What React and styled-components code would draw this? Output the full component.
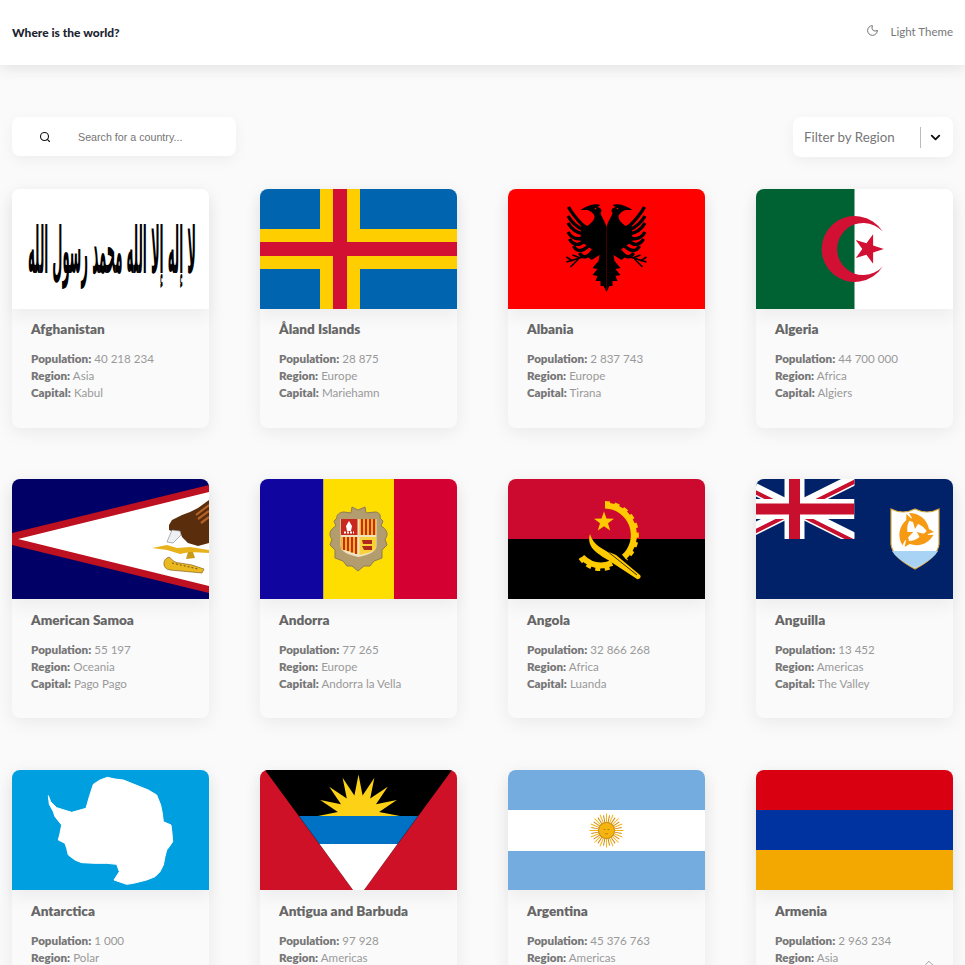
import React from "react";
import styled, { createGlobalStyle } from "styled-components";
import { ChevronDown, ChevronUp, Moon, Search } from "lucide-react";

const GlobalStyle = createGlobalStyle`
	* {
		box-sizing: border-box;
	}
	html, body {
		margin: 0;
		height: 965px;
		overflow: hidden;
		background: #fafafa;
		font-family: "Lato", "Noto Sans", sans-serif;
	}
`;

const starPoints = (cx, cy, R, r, rot, n = 5) => {
	const pts = [];
	for (let i = 0; i < n * 2; i++) {
		const a = ((rot + (i * 180) / n) * Math.PI) / 180;
		const d = i % 2 === 0 ? R : r;
		pts.push(`${(cx + d * Math.cos(a)).toFixed(2)},${(cy + d * Math.sin(a)).toFixed(2)}`);
	}
	return pts.join(" ");
};

const FlagSvg = ({ children }) => (
	<FlagImage viewBox="0 0 197 120" preserveAspectRatio="none">
		{children}
	</FlagImage>
);

const Afghanistan = () => (
	<FlagSvg>
		<rect width="197" height="120" fill="#fff" />
		<ShahadaText x="184" y="84" textLength="168" lengthAdjust="spacingAndGlyphs">
			لا إله إلا الله محمد رسول الله
		</ShahadaText>
	</FlagSvg>
);

const Aland = () => (
	<FlagSvg>
		<rect width="197" height="120" fill="#0064ae" />
		<rect x="60" width="40" height="120" fill="#ffce00" />
		<rect y="40" width="197" height="40" fill="#ffce00" />
		<rect x="73" width="14" height="120" fill="#d21034" />
		<rect y="53" width="197" height="14" fill="#d21034" />
	</FlagSvg>
);

const featherTips = [
	[38, 18],
	[38.5, 27],
	[38.5, 34],
	[38.5, 43],
	[37, 50],
	[33, 57],
	[27, 64],
];

const eagleHalf = (
	<g>
		<path
			d="M0,38 C2,31 5,28 6,24 C4,22 5,19 9,18 L6,16 C13,14 20,17 26,21 L19,21 C16,22 13,24 12,27 C12,31 15,34 19,37 L25,34 L26,52 L18,58 L12,62 L20,67 L15,71 L7,66 L8,72 L14,79 L9,80 L14,86 L9,87 L11,92 L6,92 L6,97 L3,97 L0,103 Z"
			fill="#000"
		/>
		{featherTips.map(([x, y], i) => (
			<path
				key={y}
				d={`M${23 - (i > 4 ? (i - 4) * 5 : 0)},${37 + i * 4} Q${x - 5},${y + 9} ${x},${y}`}
				fill="none"
				stroke="#000"
				strokeWidth="3.4"
			/>
		))}
		<path d="M17,66 L40,73 M26,69 L34,66 M28,70 L36,78 M34,72 L40,68" stroke="#000" strokeWidth="1.6" fill="none" />
		<circle cx="11" cy="19.5" r="0.8" fill="#f00" />
	</g>
);

const Albania = () => (
	<FlagSvg>
		<rect width="197" height="120" fill="#f00" />
		<g transform="translate(98.5,0)">
			{eagleHalf}
			<g transform="scale(-1,1)">{eagleHalf}</g>
		</g>
	</FlagSvg>
);

const Algeria = () => (
	<FlagSvg>
		<rect width="197" height="120" fill="#fff" />
		<rect width="98.5" height="120" fill="#006233" />
		<path d="M126.7,42.6 A33,33 0 1,0 126.7,77.4 A26.1,26.1 0 1,1 126.7,42.6 Z" fill="#d21034" />
		<polygon points={starPoints(112.3, 60, 15.5, 6, 0)} fill="#d21034" />
	</FlagSvg>
);

const AmericanSamoa = () => (
	<FlagSvg>
		<rect width="197" height="120" fill="#006" />
		<polygon points="0,54 197,6 197,114 0,66" fill="#bd1021" />
		<polygon points="6,60 197,13 197,107" fill="#fff" />
		<path d="M197,21 L186,29 L178,33 L170,36 L160,41 L157,46 L157,51 L162,53 L168,52 L170,58 L176,64 L186,67 L197,64 Z" fill="#5a2d0c" />
		<path d="M197,26 L184,36 M197,32 L186,40 M197,38 L189,44" stroke="#b5622a" strokeWidth="2.2" />
		<path d="M160,51 C158,56 156,60 155,63 L161,64 L169,56 L168,52 Z" fill="#eef0f3" stroke="#77808c" strokeWidth="0.6" />
		<path d="M140,69 L155,66 L165,69 L178,68 L197,71 L197,74 L178,73 L168,75 L155,71 Z" fill="#e8b21d" />
		<path d="M176,73 L174,80 L183,79 L181,73 Z" fill="#c99a17" />
		<path d="M157,78 C150,80 150,90 158,91 L190,94 L192,90 L180,86 L168,84 C162,84 160,80 157,78 Z" fill="#eab81f" stroke="#74521a" strokeWidth="0.6" />
		<path d="M160,84 L186,90" stroke="#74521a" strokeWidth="1" strokeDasharray="2 2" />
	</FlagSvg>
);

const Andorra = () => (
	<FlagSvg>
		<rect width="63.5" height="120" fill="#10069f" />
		<rect x="63.5" width="70.5" height="120" fill="#fedd00" />
		<rect x="134" width="63" height="120" fill="#d50032" />
		<path
			d="M84,33 L91,34 L92,28 L98,31 L105,28 L106,34 L115,33 C119,33 121,36 120,39 L123,42 L121,47 C127,50 129,56 125,60 L127,66 L122,71 L122,79 L114,82 L110,87 L104,87 L98,92 L92,87 L87,87 L83,82 L75,79 L75,71 L70,66 L72,60 C68,56 70,50 76,47 L74,42 L77,39 C76,36 80,33 84,33 Z"
			fill="#b39c6d"
			stroke="#8f7c54"
			strokeWidth="1"
		/>
		<path d="M80.5,40 H116.5 V67 C116.5,73 108,76 98.5,78 C89,76 80.5,73 80.5,67 Z" fill="#efe3bd" />
		<rect x="81" y="40" width="16.5" height="16" fill="#c8281e" />
		<path d="M89,42 L92,47 L91,52 H87 L86,47 Z" fill="#fff" />
		<path d="M84,53.5 H94" stroke="#fff" strokeWidth="2" strokeDasharray="2 1" />
		<rect x="99.5" y="40" width="16.5" height="16" fill="#f3b61f" />
		<path d="M102,40 V56 M106,40 V56 M110,40 V56 M114,40 V56" stroke="#c8281e" strokeWidth="2" />
		<path d="M81,58 H97.5 V75 L81,70 Z" fill="#f3b61f" />
		<path d="M84,58 V71 M88,58 V72 M92,58 V73.5 M96,58 V75" stroke="#c8281e" strokeWidth="2" />
		<path d="M99.5,58 H116 V68 C116,72 108,74 99.5,76 Z" fill="#f7d23a" />
		<path d="M102,61 H112 V65 H103 Z M102,67 H112 V71 H104 Z" fill="#b02a1c" />
	</FlagSvg>
);

const Angola = () => (
	<FlagSvg>
		<rect width="197" height="60" fill="#cc092f" />
		<rect y="60" width="197" height="60" fill="#000" />
		<path d="M97,26.5 A29.5,29.5 0 0,1 116,78" fill="none" stroke="#ffcb00" strokeWidth="6" />
		<path d="M97,24 A32,32 0 0,1 118,80" fill="none" stroke="#ffcb00" strokeWidth="4" strokeDasharray="5 4.5" />
		<path d="M74,78 C82,86 92,89 104,84" fill="none" stroke="#ffcb00" strokeWidth="6" />
		<path d="M72,79 C80,90 92,93 104,88" fill="none" stroke="#ffcb00" strokeWidth="3.5" strokeDasharray="5 4.5" />
		<polygon points={starPoints(96, 43, 10.5, 4.2, -90)} fill="#ffcb00" />
		<path d="M82,55 C79,65 84,72 100,81 L129,100 C131,101 134,98 132,96 L108,76 C95,71 85,66 82,55 Z" fill="#ffcb00" />
		<path d="M94,68 L129,96" stroke="#000" strokeWidth="0.8" />
	</FlagSvg>
);

const dolphin = (
	<path d="M-6,-18 C4,-18 12,-12 14,-2 L19,1 L13,3 C11,-2 8,-5 3,-7 L0,-2 L-2,-9 L-8,-11 L-3,-13 Z" fill="#f79a13" />
);

const Anguilla = () => (
	<FlagSvg>
		<rect width="197" height="120" fill="#012169" />
		<clipPath id="jack">
			<rect width="98.5" height="60" />
		</clipPath>
		<g clipPath="url(#jack)">
			<path d="M-21.5,0 L98.5,60 M-21.5,60 L98.5,0" stroke="#fff" strokeWidth="12" />
			<path d="M-21.5,0 L38.5,30 M38.5,30 L98.5,60" stroke="#c8102e" strokeWidth="4" transform="translate(-1.5,2)" />
			<path d="M-21.5,60 L38.5,30 M38.5,30 L98.5,0" stroke="#c8102e" strokeWidth="4" transform="translate(1.5,2)" />
			<path d="M38.5,0 V60 M-21.5,30 H98.5" stroke="#fff" strokeWidth="20" />
			<path d="M38.5,0 V60 M-21.5,30 H98.5" stroke="#c8102e" strokeWidth="11" />
		</g>
		<path d="M135,30 Q147,36 159,30 Q171,36 183,30 L183,65 Q182,78 159,90 Q136,78 135,65 Z" fill="#fff" stroke="#d9a83a" strokeWidth="1.2" />
		<path d="M136,72 H182 Q178,80 159,89 Q140,80 136,72 Z" fill="#a8d3f5" />
		<g transform="translate(159,52)">
			{dolphin}
			<g transform="rotate(120)">{dolphin}</g>
			<g transform="rotate(240)">{dolphin}</g>
		</g>
	</FlagSvg>
);

const antarcticaOutline = [
	[145, 92], [152, 110], [170, 128], [215, 142], [258, 130], [268, 95], [280, 58], [300, 45], [322, 37], [345, 42], [370, 45],
	[395, 55], [420, 65], [445, 75], [470, 90], [482, 120], [487, 145], [490, 170], [513, 180], [516, 205], [518, 230],
	[508, 245], [500, 255], [495, 275], [490, 300], [480, 320], [465, 335], [440, 345], [420, 350], [400, 355], [380, 358],
	[342, 345], [358, 320], [350, 298], [320, 295], [285, 295], [245, 293], [225, 285], [205, 270], [200, 250], [195, 235],
	[175, 225], [180, 205], [185, 180], [165, 155], [160, 140], [148, 118],
]
	.map(([x, y]) => `${(x - 36) / 3},${(y - 15) / 3}`)
	.join(" ");

const Antarctica = () => (
	<FlagSvg>
		<rect width="197" height="120" fill="#009fdf" />
		<polygon points={antarcticaOutline} fill="#fff" stroke="#fff" strokeWidth="1" strokeLinejoin="round" />
	</FlagSvg>
);

const AntiguaBarbuda = () => {
	const sun = [[58, 46]];
	for (let i = 0; i < 9; i++) {
		const tip = ((180 + i * 22.5) * Math.PI) / 180;
		const inner = ((191.25 + i * 22.5) * Math.PI) / 180;
		if (i > 0) {
			sun.push([98.5 + 41.5 * Math.cos(tip), 46 + 41.5 * Math.sin(tip)]);
		}
		if (i < 8) {
			sun.push([98.5 + 21 * Math.cos(inner), 46 + 21 * Math.sin(inner)]);
		}
	}
	sun.push([139, 46]);
	return (
		<FlagSvg>
			<rect width="197" height="120" fill="#ce1126" />
			<polygon points="5,0 192,0 104,120 93,120" fill="#000" />
			<polygon points="39,46 158,46 137.5,74 59.5,74" fill="#0072c6" />
			<polygon points="59.5,74 137.5,74 104,120 93,120" fill="#fff" />
			<polygon points={sun.map(([x, y]) => `${x.toFixed(1)},${y.toFixed(1)}`).join(" ")} fill="#fcd116" />
		</FlagSvg>
	);
};

const sunRays = Array.from({ length: 32 }, (_, i) => i * 11.25);

const Argentina = () => (
	<FlagSvg>
		<rect width="197" height="120" fill="#74acdf" />
		<rect y="40" width="197" height="41" fill="#fff" />
		<g transform="translate(98.5,60.5)">
			{sunRays.map((deg, i) => (
				<line
					key={deg}
					x1="7"
					x2={i % 2 ? "15.5" : "17"}
					stroke={i % 2 ? "#c98a1a" : "#f6b40e"}
					strokeWidth="1"
					transform={`rotate(${deg})`}
				/>
			))}
			<circle r="8" fill="#f6b40e" stroke="#b97a14" strokeWidth="0.8" />
			<path d="M-3,-1 H-1 M1,-1 H3 M-1.5,3 Q0,4 1.5,3" stroke="#a0620f" strokeWidth="0.6" fill="none" />
		</g>
	</FlagSvg>
);

const Armenia = () => (
	<FlagSvg>
		<rect width="197" height="40" fill="#d90012" />
		<rect y="40" width="197" height="40" fill="#0033a0" />
		<rect y="80" width="197" height="40" fill="#f2a800" />
	</FlagSvg>
);

const countries = [
	{ name: "Afghanistan", population: "40 218 234", region: "Asia", capital: "Kabul", Flag: Afghanistan },
	{ name: "Åland Islands", population: "28 875", region: "Europe", capital: "Mariehamn", Flag: Aland },
	{ name: "Albania", population: "2 837 743", region: "Europe", capital: "Tirana", Flag: Albania },
	{ name: "Algeria", population: "44 700 000", region: "Africa", capital: "Algiers", Flag: Algeria },
	{ name: "American Samoa", population: "55 197", region: "Oceania", capital: "Pago Pago", Flag: AmericanSamoa },
	{ name: "Andorra", population: "77 265", region: "Europe", capital: "Andorra la Vella", Flag: Andorra },
	{ name: "Angola", population: "32 866 268", region: "Africa", capital: "Luanda", Flag: Angola },
	{ name: "Anguilla", population: "13 452", region: "Americas", capital: "The Valley", Flag: Anguilla },
	{ name: "Antarctica", population: "1 000", region: "Polar", capital: "", Flag: Antarctica },
	{ name: "Antigua and Barbuda", population: "97 928", region: "Americas", capital: "Saint John's", Flag: AntiguaBarbuda },
	{ name: "Argentina", population: "45 376 763", region: "Americas", capital: "Buenos Aires", Flag: Argentina },
	{ name: "Armenia", population: "2 963 234", region: "Asia", capital: "Yerevan", Flag: Armenia },
];

const App = () => {
	return (
		<>
			<GlobalStyle />
			<Header>
				<Logo>Where is the world?</Logo>
				<ThemeToggle>
					<Moon size={13} strokeWidth={1.5} />
					<span>Light Theme</span>
				</ThemeToggle>
			</Header>
			<Main>
				<Toolbar>
					<SearchBox>
						<Search size={12} strokeWidth={2.2} color="#111" />
						<SearchInput type="text" placeholder="Search for a country..." />
					</SearchBox>
					<RegionFilter>
						<span>Filter by Region</span>
						<FilterDivider />
						<ChevronDown size={15} strokeWidth={3} color="#111" />
					</RegionFilter>
				</Toolbar>
				<CardGrid>
					{countries.map(({ name, population, region, capital, Flag }) => (
						<Card key={name}>
							<FlagFrame>
								<Flag />
							</FlagFrame>
							<CardBody>
								<CardTitle>{name}</CardTitle>
								<Detail>
									<b>Population:</b> {population}
								</Detail>
								<Detail>
									<b>Region:</b> {region}
								</Detail>
								<Detail>
									<b>Capital:</b> {capital}
								</Detail>
							</CardBody>
						</Card>
					))}
				</CardGrid>
			</Main>
			<ScrollTop>
				<ChevronUp size={14} strokeWidth={1} color="#666" />
			</ScrollTop>
		</>
	);
};

export default App;

const Header = styled.header`
	height: 65px;
	padding: 0 12px;
	display: flex;
	justify-content: space-between;
	align-items: center;
	background: #fff;
	box-shadow: 0 3px 14px rgba(0, 0, 0, 0.1);
`;

const Logo = styled.h1`
	margin: 0 0 1px;
	font-size: 12px;
	font-weight: 900;
	color: #1c2430;
`;

const ThemeToggle = styled.div`
	display: flex;
	align-items: center;
	gap: 12px;
	margin-bottom: 2px;
	color: #777;
	font-size: 11.5px;
	font-weight: 400;
	svg {
		margin-top: -2px;
		color: #555;
	}
`;

const Main = styled.main`
	padding: 52px 12px 0;
`;

const Toolbar = styled.div`
	display: flex;
	justify-content: space-between;
	align-items: flex-start;
	margin-bottom: 31.6px;
`;

const SearchBox = styled.div`
	width: 224px;
	height: 39px;
	padding-left: 27px;
	display: flex;
	align-items: center;
	gap: 27px;
	background: #fff;
	border-radius: 8px;
	box-shadow: 0 4px 14px rgba(0, 0, 0, 0.05);
`;

const SearchInput = styled.input`
	flex: 1;
	min-width: 0;
	padding: 0;
	border: 0;
	outline: 0;
	background: transparent;
	font-family: "Liberation Sans", Arial, sans-serif;
	font-size: 10.7px;
`;

const RegionFilter = styled.div`
	width: 160px;
	height: 40px;
	padding: 0 10px 0 11px;
	display: flex;
	align-items: center;
	justify-content: space-between;
	background: #fff;
	border-radius: 8px;
	box-shadow: 0 4px 14px rgba(0, 0, 0, 0.05);
	color: #777;
	font-size: 13.3px;
	font-weight: 400;
`;

const FilterDivider = styled.i`
	width: 1px;
	height: 21px;
	margin-left: auto;
	margin-right: 7px;
	background: #bbb;
`;

const CardGrid = styled.section`
	display: grid;
	grid-template-columns: repeat(4, 197px);
	justify-content: space-between;
	grid-auto-rows: 239.2px;
	row-gap: 51.5px;
`;

const Card = styled.article`
	border-radius: 8px;
	background: #fafafa;
	box-shadow: 0 4px 18px rgba(0, 0, 0, 0.07);
`;

const FlagFrame = styled.div`
	height: 120px;
	border-radius: 8px 8px 0 0;
	overflow: hidden;
	box-shadow: 0 8px 16px rgba(0, 0, 0, 0.05);
`;

const FlagImage = styled.svg`
	display: block;
	width: 100%;
	height: 100%;
`;

const ShahadaText = styled.text`
	font-family: "DejaVu Sans", sans-serif;
	font-size: 64px;
	font-weight: 700;
	direction: rtl;
	fill: #000;
`;

const CardBody = styled.div`
	padding: 12.8px 19px 0;
`;

const CardTitle = styled.h2`
	margin: 0 0 12px;
	font-size: 13.6px;
	line-height: 17px;
	font-weight: 800;
	color: #666;
`;

const Detail = styled.p`
	margin: 0;
	font-size: 11.6px;
	line-height: 17px;
	font-weight: 400;
	color: #999;
	b {
		font-weight: 800;
		color: #777;
	}
`;

const ScrollTop = styled.div`
	position: fixed;
	left: 922px;
	top: 956px;
	line-height: 0;
`;
